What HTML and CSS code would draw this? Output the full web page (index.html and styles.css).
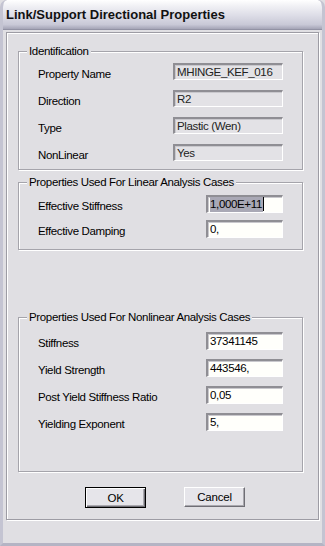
FILE: index.html
```html
<!DOCTYPE html>
<html lang="en">
<head>
  <meta charset="UTF-8" />
  <meta name="viewport" content="width=device-width, initial-scale=1.0" />
  <title>Link/Support Directional Properties</title>
  <link rel="stylesheet" href="styles.css">
</head>
<body>
  <div class="window">
    <div class="titlebar">Link/Support Directional Properties</div>
    <div class="client">
      <div class="frame">

        <div class="group group-id">
          <span class="group-title">Identification</span>
          <div class="row"><span class="label">Property Name</span><span class="field readonly">MHINGE_KEF_016</span></div>
          <div class="row"><span class="label">Direction</span><span class="field readonly">R2</span></div>
          <div class="row"><span class="label">Type</span><span class="field readonly">Plastic (Wen)</span></div>
          <div class="row"><span class="label">NonLinear</span><span class="field readonly">Yes</span></div>
        </div>

        <div class="group group-linear">
          <span class="group-title">Properties Used For Linear Analysis Cases</span>
          <div class="row"><span class="label">Effective Stiffness</span><span class="field"><span class="selected">1,000E+11</span><span class="caret"></span></span></div>
          <div class="row"><span class="label">Effective Damping</span><span class="field">0,</span></div>
        </div>

        <div class="group group-nonlinear">
          <span class="group-title">Properties Used For Nonlinear Analysis Cases</span>
          <div class="row"><span class="label">Stiffness</span><span class="field">37341145</span></div>
          <div class="row"><span class="label">Yield Strength</span><span class="field">443546,</span></div>
          <div class="row"><span class="label">Post Yield Stiffness Ratio</span><span class="field">0,05</span></div>
          <div class="row"><span class="label">Yielding Exponent</span><span class="field">5,</span></div>
        </div>

        <div class="buttons">
          <button class="btn btn-default">OK</button>
          <button class="btn">Cancel</button>
        </div>

      </div>
    </div>
  </div>
</body>
</html>
```

FILE: styles.css
```css
body {
  margin: 0;
  padding: 0;
  font-family: "Liberation Sans", Arial, sans-serif;
  font-size: 11.5px;
  letter-spacing: -0.35px;
  color: #000;
  background: #e0dfe3;
}
.window {
  width: 325px;
  height: 546px;
  box-sizing: border-box;
  display: flex;
  flex-direction: column;
  background: #c9c9d6;
  border-left: 3px solid #c4c4d2;
  border-right: 3px solid #c4c4d2;
  border-bottom: 3px solid #b4b4c4;
  box-shadow: inset 0 0 0 1px #8d8d9e;
  border-radius: 7px 7px 0 0;
  overflow: hidden;
}
.titlebar {
  height: 30px;
  margin: 0 -3px;
  padding: 0 0 0 6px;
  box-sizing: border-box;
  line-height: 29px;
  font-size: 13px;
  font-weight: bold;
  letter-spacing: 0;
  color: #111;
  background: linear-gradient(#ffffff 0%, #f1f1f5 20%, #dcdce6 55%, #c8c8d6 85%, #a4a4b6 100%);
  border-bottom: 1px solid #9292a4;
  border-radius: 7px 7px 0 0;
}
.client {
  flex: 1;
  background: #e0dfe3;
  padding: 2px 0 0 3px;
}
.frame {
  width: 313px;
  height: 488px;
  box-sizing: border-box;
  border: 1px solid #9d9ca4;
  box-shadow: inset 1px 1px 0 #fff, 1px 1px 0 #fff;
  padding: 18px 0 0 11px;
}
.group {
  position: relative;
  width: 285px;
  box-sizing: border-box;
  border: 1px solid #a5a4ab;
  box-shadow: inset 1px 1px 0 #fff, 1px 1px 0 #fff;
  padding: 0 0 0 19px;
  display: flex;
  flex-direction: column;
}
.group-title {
  position: absolute;
  top: -8px;
  left: 8px;
  padding: 0 2px;
  background: #e0dfe3;
  line-height: 15px;
}
.group-id {
  padding-top: 11px;
  padding-bottom: 8px;
  gap: 10px;
}
.group-linear {
  margin-top: 12px;
  padding-top: 12px;
  padding-bottom: 11px;
  gap: 7px;
}
.group-nonlinear {
  margin-top: 67px;
  padding-top: 14px;
  padding-bottom: 40px;
  gap: 9px;
}
.row {
  display: flex;
  align-items: flex-start;
  height: 18px;
}
.group-id .row { height: 17px; }
.label {
  padding-top: 4px;
  line-height: 15px;
}
.group-id .label { width: 135px; }
.group-linear .label, .group-nonlinear .label { width: 168px; }
.field {
  box-sizing: border-box;
  height: 18px;
  width: 77px;
  padding: 0 0 0 2px;
  line-height: 15px;
  background: #fffffb;
  border-top: 2px solid #8f8e94;
  border-left: 2px solid #8f8e94;
  border-bottom: 1px solid #fff;
  border-right: 1px solid #fff;
  box-shadow: inset 1px 1px 0 #c9c8cd;
  white-space: nowrap;
  display: flex;
  align-items: flex-start;
}
.field.readonly {
  width: 110px;
  height: 17px;
  background: #e3e2e6;
  color: #222;
}
.selected {
  background: #a9a8b5;
  padding-right: 1px;
}
.caret {
  width: 1px;
  height: 14px;
  background: #000;
}
.buttons {
  display: flex;
  gap: 38px;
  margin-top: 15px;
  padding-left: 67px;
}
.btn {
  box-sizing: border-box;
  width: 61px;
  height: 20px;
  padding: 0;
  font-family: inherit;
  font-size: 11.5px;
  letter-spacing: -0.2px;
  color: #000;
  background: #e6e5ea;
  border-top: 1px solid #fff;
  border-left: 1px solid #fff;
  border-right: 1px solid #6f6e75;
  border-bottom: 1px solid #6f6e75;
  box-shadow: inset -1px -1px 0 #a9a8ae;
}
.btn-default {
  height: 21px;
  border: 1px solid #000;
  box-shadow: inset 1px 1px 0 #fff, inset -1px -1px 0 #6f6e75, inset -2px -2px 0 #a9a8ae;
}
```
